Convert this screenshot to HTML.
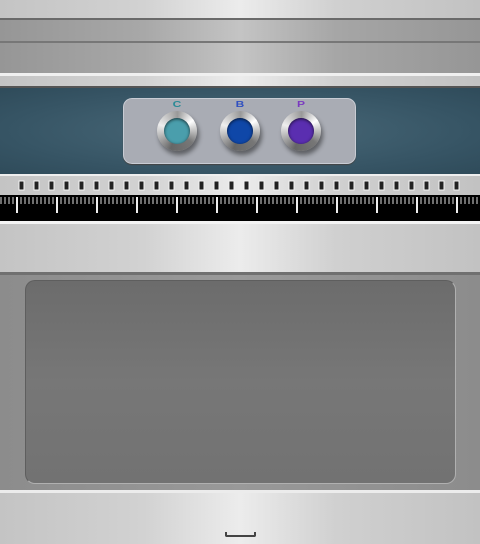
<!DOCTYPE html>
<html><head><meta charset="utf-8"><style>
*{margin:0;padding:0;box-sizing:border-box}
body{width:480px;height:544px;overflow:hidden;position:relative;background:#999;font-family:"Liberation Sans",sans-serif}
.a{position:absolute;left:0;width:480px}
.lm{background:linear-gradient(90deg,#c4c4c4 0%,#d2d2d2 30%,#ececec 50%,#d0d0d0 70%,#c2c2c2 100%)}
.mm{background:linear-gradient(90deg,#969696 0%,#a8a8a8 30%,#c4c4c4 50%,#a6a6a6 70%,#969696 100%)}
.btn{position:absolute;width:40px;height:40px;border-radius:50%;top:111px;background:conic-gradient(from 200deg,#666,#eee 25%,#999 45%,#fff 60%,#777 80%,#666);box-shadow:2px 4px 5px rgba(0,0,0,.45)}
.btn i{position:absolute;left:7px;top:7px;width:26px;height:26px;border-radius:50%;box-shadow:inset 0 1px 3px rgba(0,0,0,.7)}
.lbl{position:absolute;top:100px;font-size:8px;font-weight:bold;width:20px;text-align:center;transform:scaleX(1.5)}
</style></head><body>
<div class="a lm" style="top:0;height:18px"></div>
<div class="a" style="top:18px;height:2px;background:#6a6a6a"></div>
<div class="a mm" style="top:20px;height:21px"></div>
<div class="a" style="top:41px;height:2px;background:#777"></div>
<div class="a mm" style="top:43px;height:30px"></div>
<div class="a" style="top:73px;height:3px;background:#f0f0f0"></div>
<div class="a lm" style="top:76px;height:10px"></div>
<div class="a" style="top:86px;height:2px;background:#555"></div>
<div class="a" style="top:88px;height:86px;background:radial-gradient(ellipse at 50% 50%,#4a6a7a,#365464 70%,#2f4b5a)"></div>
<div style="position:absolute;left:123px;top:98px;width:233px;height:66px;border-radius:9px;background:#a9acb4;border:1px solid #c8ccd4;box-shadow:0 1px 1px #444"></div>
<div class="lbl" style="left:167px;color:#2a8a96">C</div>
<div class="lbl" style="left:230px;color:#3050c0">B</div>
<div class="lbl" style="left:291px;color:#7a3ac0">P</div>
<div class="btn" style="left:157px"><i style="background:#4a9eac"></i></div>
<div class="btn" style="left:220px"><i style="background:#0f47a8"></i></div>
<div class="btn" style="left:281px"><i style="background:#5a2eb0"></i></div>
<div class="a lm" style="top:174px;height:21px;border-top:2px solid #eee"></div>
<svg style="position:absolute;left:0;top:174px" width="480" height="48">
<g fill="#222" stroke="#f4f4f4" stroke-width="1">
<rect x="19" y="7" width="5" height="9"/><rect x="34" y="7" width="5" height="9"/><rect x="49" y="7" width="5" height="9"/><rect x="64" y="7" width="5" height="9"/><rect x="79" y="7" width="5" height="9"/><rect x="94" y="7" width="5" height="9"/><rect x="109" y="7" width="5" height="9"/><rect x="124" y="7" width="5" height="9"/><rect x="139" y="7" width="5" height="9"/><rect x="154" y="7" width="5" height="9"/><rect x="169" y="7" width="5" height="9"/><rect x="184" y="7" width="5" height="9"/><rect x="199" y="7" width="5" height="9"/><rect x="214" y="7" width="5" height="9"/><rect x="229" y="7" width="5" height="9"/><rect x="244" y="7" width="5" height="9"/><rect x="259" y="7" width="5" height="9"/><rect x="274" y="7" width="5" height="9"/><rect x="289" y="7" width="5" height="9"/><rect x="304" y="7" width="5" height="9"/><rect x="319" y="7" width="5" height="9"/><rect x="334" y="7" width="5" height="9"/><rect x="349" y="7" width="5" height="9"/><rect x="364" y="7" width="5" height="9"/><rect x="379" y="7" width="5" height="9"/><rect x="394" y="7" width="5" height="9"/><rect x="409" y="7" width="5" height="9"/><rect x="424" y="7" width="5" height="9"/><rect x="439" y="7" width="5" height="9"/><rect x="454" y="7" width="5" height="9"/>
</g>
<rect x="0" y="21" width="480" height="26" fill="#000"/>
<path d="M1 23v7M5 23v7M9 23v7M13 23v7M21 23v7M25 23v7M29 23v7M33 23v7M37 23v7M41 23v7M45 23v7M49 23v7M53 23v7M61 23v7M65 23v7M69 23v7M73 23v7M77 23v7M81 23v7M85 23v7M89 23v7M93 23v7M101 23v7M105 23v7M109 23v7M113 23v7M117 23v7M121 23v7M125 23v7M129 23v7M133 23v7M141 23v7M145 23v7M149 23v7M153 23v7M157 23v7M161 23v7M165 23v7M169 23v7M173 23v7M181 23v7M185 23v7M189 23v7M193 23v7M197 23v7M201 23v7M205 23v7M209 23v7M213 23v7M221 23v7M225 23v7M229 23v7M233 23v7M237 23v7M241 23v7M245 23v7M249 23v7M253 23v7M261 23v7M265 23v7M269 23v7M273 23v7M277 23v7M281 23v7M285 23v7M289 23v7M293 23v7M301 23v7M305 23v7M309 23v7M313 23v7M317 23v7M321 23v7M325 23v7M329 23v7M333 23v7M341 23v7M345 23v7M349 23v7M353 23v7M357 23v7M361 23v7M365 23v7M369 23v7M373 23v7M381 23v7M385 23v7M389 23v7M393 23v7M397 23v7M401 23v7M405 23v7M409 23v7M413 23v7M421 23v7M425 23v7M429 23v7M433 23v7M437 23v7M441 23v7M445 23v7M449 23v7M453 23v7M461 23v7M465 23v7M469 23v7M473 23v7M477 23v7" stroke="#ddd" stroke-width="1"/>
<path d="M17 23v16M57 23v16M97 23v16M137 23v16M177 23v16M217 23v16M257 23v16M297 23v16M337 23v16M377 23v16M417 23v16M457 23v16" stroke="#eee" stroke-width="2"/>
</svg>
<div class="a" style="top:221px;height:3px;background:#f4f4f4"></div>
<div class="a lm" style="top:224px;height:48px"></div>
<div class="a" style="top:272px;height:3px;background:#707070"></div>
<div class="a" style="top:275px;height:215px;background:linear-gradient(90deg,#8c8c8c,#999 50%,#8c8c8c)"></div>
<div style="position:absolute;left:25px;top:280px;width:431px;height:204px;border-radius:10px;background:linear-gradient(180deg,#6c6c6c,#777 50%,#727272);border:1px solid #5e5e5e;border-right-color:#b0b0b0;border-bottom-color:#b0b0b0"></div>
<div class="a" style="top:490px;height:3px;background:#ececec"></div>
<div class="a lm" style="top:493px;height:51px"></div>
<div style="position:absolute;left:225px;top:532px;width:31px;height:5px;border:2px solid #444;border-top:none;border-radius:0 0 2px 2px"></div>
</body></html>
